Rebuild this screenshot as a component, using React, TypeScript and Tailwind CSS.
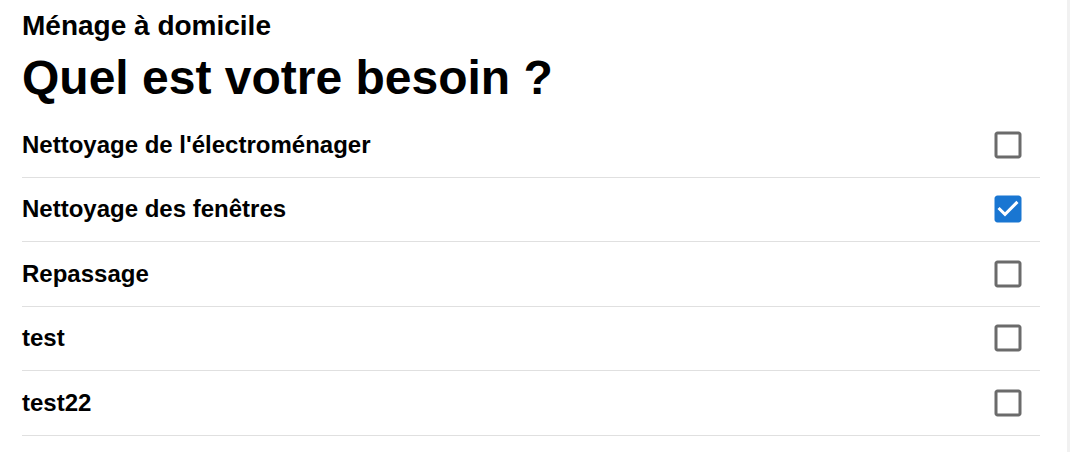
import React, { useState } from 'react';

const services = [
  { id: 'electro', label: "Nettoyage de l'électroménager" },
  { id: 'fenetres', label: 'Nettoyage des fenêtres' },
  { id: 'repassage', label: 'Repassage' },
  { id: 'test', label: 'test' },
  { id: 'test22', label: 'test22' },
];

function CheckIcon({ checked }: { checked: boolean }) {
  return checked ? (
    <svg viewBox="0 0 24 24" className="w-9 h-9" fill="#1976d2">
      <path d="M19 3H5c-1.11 0-2 .9-2 2v14c0 1.1.89 2 2 2h14c1.11 0 2-.9 2-2V5c0-1.1-.89-2-2-2zm-9 14l-5-5 1.41-1.41L10 14.17l7.59-7.59L19 8l-9 9z" />
    </svg>
  ) : (
    <svg viewBox="0 0 24 24" className="w-9 h-9" fill="#6b6b6b">
      <path d="M19 5v14H5V5h14m0-2H5c-1.1 0-2 .9-2 2v14c0 1.1.9 2 2 2h14c1.1 0 2-.9 2-2V5c0-1.1-.9-2-2-2z" />
    </svg>
  );
}

export default function App() {
  const [selected, setSelected] = useState<string[]>(['fenetres']);

  const toggle = (id: string) => {
    setSelected((prev) => (prev.includes(id) ? prev.filter((x) => x !== id) : [...prev, id]));
  };

  return (
    <div className="flex h-[452px] w-full bg-white text-black font-['Liberation_Sans',Arial,sans-serif]">
      <main className="flex-1 pl-[22px] pr-[27px] pt-[10px]">
        {/* Header */}
        <h2 className="text-[28px] leading-[32px] font-bold">Ménage à domicile</h2>
        <h1 className="mt-[8px] text-[48px] leading-[55px] font-bold">Quel est votre besoin ?</h1>

        {/* Options */}
        <ul className="mt-[8px]">
          {services.map((s) => (
            <li
              key={s.id}
              onClick={() => toggle(s.id)}
              className="flex items-center justify-between h-[64.5px] border-b border-[#e0e0e0] cursor-pointer"
            >
              <span className="text-[24px] font-bold">{s.label}</span>
              <span className="mr-[14px]">
                <CheckIcon checked={selected.includes(s.id)} />
              </span>
            </li>
          ))}
        </ul>
      </main>
      <div className="w-[3px] bg-[#f1f1f1]" />
    </div>
  );
}
